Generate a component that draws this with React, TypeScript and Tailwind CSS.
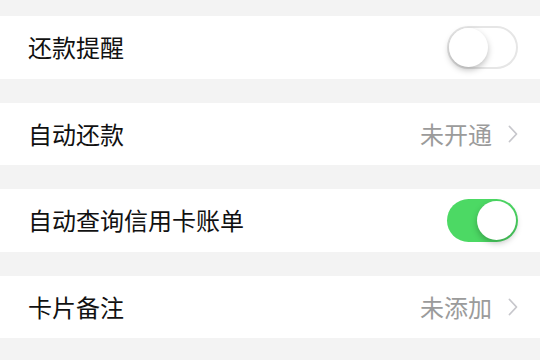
import { useState } from 'react'

function Toggle({ on, onChange }: { on: boolean; onChange: () => void }) {
  return (
    <button
      onClick={onChange}
      className={
        on
          ? 'relative h-[43px] w-[71px] rounded-full bg-[#4cd964] transition-colors'
          : 'relative h-[43px] w-[71px] rounded-full border-[2px] border-[#e6e6e6] bg-white transition-colors'
      }
    >
      <span
        className={
          on
            ? 'absolute right-[2px] top-[2px] h-[39px] w-[39px] rounded-full bg-white shadow-[0_3px_6px_rgba(0,0,0,0.25)]'
            : 'absolute left-0 top-0 h-[39px] w-[39px] rounded-full bg-white shadow-[0_3px_6px_rgba(0,0,0,0.25)]'
        }
      />
    </button>
  )
}

function Chevron() {
  return (
    <svg width="10" height="18" viewBox="0 0 10 18" className="ml-[16px]">
      <path d="M1.5 1.5 L8.5 9 L1.5 16.5" fill="none" stroke="#c7c7cc" strokeWidth="1.8" strokeLinecap="round" strokeLinejoin="round" />
    </svg>
  )
}

function Row({ label, children }: { label: string; children: React.ReactNode }) {
  return (
    <div className="flex h-[62.5px] items-center justify-between bg-white pl-[28px] pr-[22px]">
      <span className="text-[24px] leading-none text-[#111]">{label}</span>
      <div className="flex items-center">{children}</div>
    </div>
  )
}

export default function App() {
  const [remind, setRemind] = useState(false)
  const [query, setQuery] = useState(true)

  return (
    <div
      className="flex h-[360px] w-[540px] flex-col gap-6 overflow-hidden bg-[#f3f3f3] pt-[16px]"
      style={{ fontFamily: '"Noto Sans CJK SC", "Noto Sans", sans-serif' }}
    >
      <Row label="还款提醒">
        <Toggle on={remind} onChange={() => setRemind(!remind)} />
      </Row>
      <Row label="自动还款">
        <span className="text-[24px] leading-none text-[#9b9b9b]">未开通</span>
        <Chevron />
      </Row>
      <Row label="自动查询信用卡账单">
        <Toggle on={query} onChange={() => setQuery(!query)} />
      </Row>
      <Row label="卡片备注">
        <span className="text-[24px] leading-none text-[#9b9b9b]">未添加</span>
        <Chevron />
      </Row>
    </div>
  )
}
